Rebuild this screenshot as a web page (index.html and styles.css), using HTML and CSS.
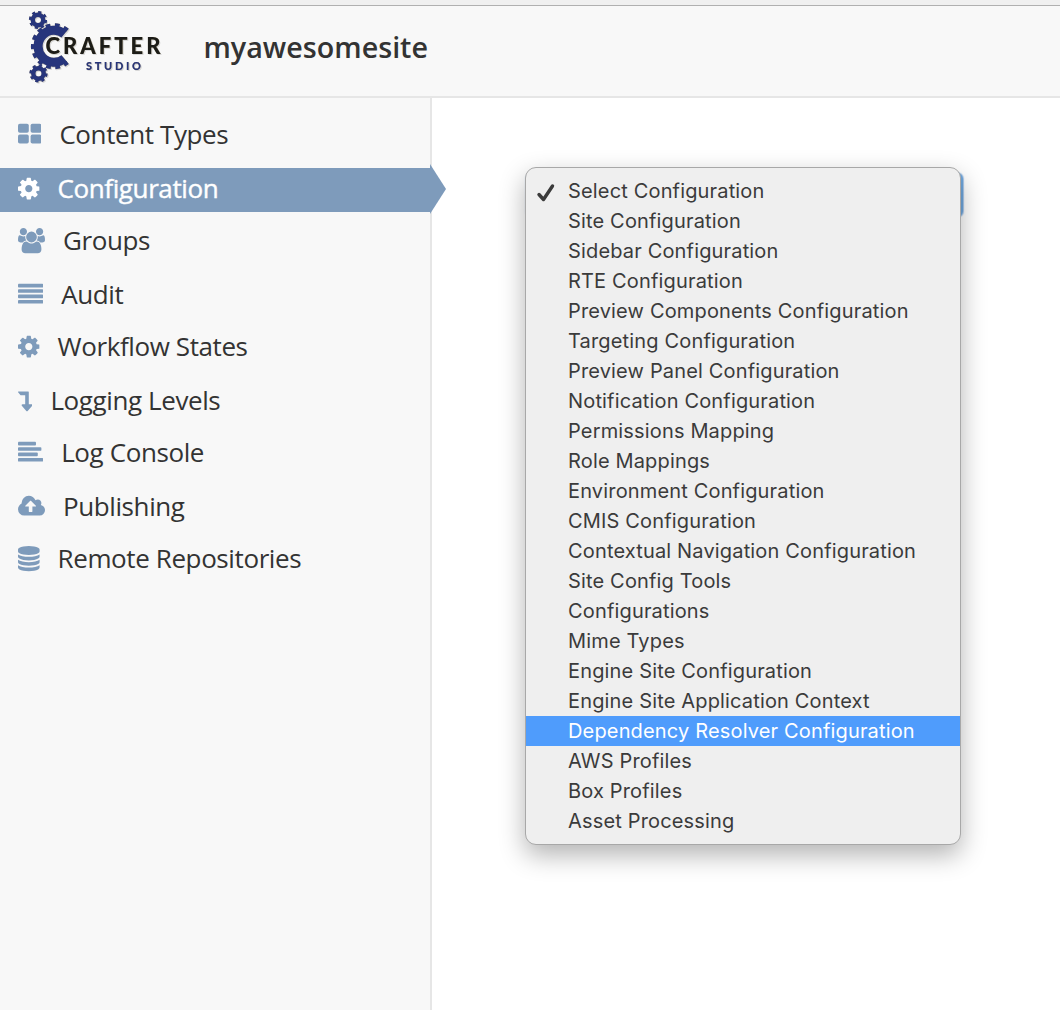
FILE: index.html
```html
<!DOCTYPE html>
<html lang="en">
<head>
<meta charset="utf-8">
<title>Crafter Studio</title>
<link rel="stylesheet" href="styles.css">
</head>
<body>
<svg class="sprite" width="0" height="0" aria-hidden="true">
  <symbol id="cog" viewBox="128 0 1536 1792"><path d="M1152 896q0-106-75-181t-181-75-181 75-75 181 75 181 181 75 181-75 75-181zm512-109v222q0 12-8 23t-20 13l-185 28q-19 54-39 91 35 50 107 138 10 12 10 25t-9 23q-27 37-99 108t-94 71q-12 0-26-9l-138-108q-44 23-91 38-16 136-29 186-7 28-36 28h-222q-14 0-24.5-8.5t-11.5-21.5l-28-184q-49-16-90-37l-141 107q-10 9-25 9-14 0-25-11-126-114-165-168-7-10-7-23 0-12 8-23 15-21 51-66.500t54-70.500q-27-50-41-99l-183-27q-13-2-21-12.500t-8-23.500v-222q0-12 8-23t19-13l186-28q14-46 39-92-40-57-107-138-10-12-10-24 0-10 9-23 26-36 98.500-107.500t94.500-71.500q13 0 26 10l138 107q44-23 91-38 16-136 29-186 7-28 36-28h222q14 0 24.500 8.500t11.500 21.500l28 184q49 16 90 37l142-107q9-9 24-9 13 0 25 10 129 119 165 170 7 8 7 22 0 12-8 23-15 21-51 66.500t-54 70.500q26 50 41 98l183 28q13 2 21 12.500t8 23.500z"/></symbol>
</svg>
<header class="header">
  <svg class="logo" width="140" height="80" viewBox="24 6 140 80">
    <g class="gear">
      <circle cx="38" cy="20" r="5.200" stroke-width="4.400"/>
      <circle cx="38" cy="20" r="7.800" stroke-width="2.600" stroke-dasharray="3.060 3.060"/>
      <circle cx="38.500" cy="73.500" r="5.200" stroke-width="4.400"/>
      <circle cx="38.500" cy="73.500" r="7.800" stroke-width="2.600" stroke-dasharray="3.060 3.060"/>
      <path d="M64.300 34A16 16 0 1 0 64.300 58.600" stroke-width="9"/>
      <path d="M67.600 30.100A21.200 21.200 0 1 0 67.600 62.500" stroke-width="3.600" stroke-dasharray="4.700 4.450"/>
    </g>
    <text class="logo-name" x="45.500" y="53.800" textLength="115">CRAFTER</text>
    <text class="logo-sub" x="86" y="70.300" textLength="55">STUDIO</text>
  </svg>
  <h1 class="site">myawesomesite</h1>
</header>
<div class="layout">
  <nav class="sidebar">
    <a class="item"><svg class="icon" width="23.400" height="25.200" viewBox="0 0 1664 1792"><rect y="128" width="768" height="640" rx="128"/><rect x="896" y="128" width="768" height="640" rx="128"/><rect y="896" width="768" height="640" rx="128"/><rect x="896" y="896" width="768" height="640" rx="128"/></svg><span>Content Types</span></a>
    <a class="item active"><svg class="icon" width="21.600" height="25.200"><use href="#cog"/></svg><span>Configuration</span></a>
    <a class="item"><svg class="icon" width="27" height="25.200" viewBox="0 0 1920 1792"><path d="M593 896q-162 5-265 128h-134q-82 0-138-40.500t-56-118.500q0-353 124-353 6 0 43.500 21t97.500 42.500 119 21.500q67 0 133-23-5 37-5 66 0 139 81 256zm1071 637q0 120-73 189.500t-194 69.500h-874q-121 0-194-69.500t-73-189.500q0-53 3.500-103.500t14-109 26.500-108.500 43-97.500 62-81 85.500-53.500 111.500-20q10 0 43 21.500t73 48 107 48 135 21.500 135-21.500 107-48 73-48 43-21.500q61 0 111.500 20t85.500 53.500 62 81 43 97.500 26.500 108.500 14 109 3.500 103.500zm-1024-1277q0 106-75 181t-181 75-181-75-75-181 75-181 181-75 181 75 75 181zm704 384q0 159-112.500 271.500t-271.500 112.500-271.500-112.500-112.500-271.500 112.500-271.500 271.500-112.500 271.500 112.500 112.500 271.500zm576 225q0 78-56 118.500t-138 40.500h-134q-103-123-265-128 81-117 81-256 0-29-5-66 66 23 133 23 59 0 119-21.500t97.500-42.500 43.500-21q124 0 124 353zm-128-609q0 106-75 181t-181 75-181-75-75-181 75-181 181-75 181 75 75 181z"/></svg><span>Groups</span></a>
    <a class="item"><svg class="icon" width="25.200" height="25.200" viewBox="0 0 1792 1792"><rect y="128" width="1792" height="256" rx="64"/><rect y="512" width="1792" height="256" rx="64"/><rect y="896" width="1792" height="256" rx="64"/><rect y="1280" width="1792" height="256" rx="64"/></svg><span>Audit</span></a>
    <a class="item"><svg class="icon" width="21.600" height="25.200"><use href="#cog"/></svg><span>Workflow States</span></a>
    <a class="item"><svg class="icon" width="14.400" height="25.200" viewBox="0 0 1024 1792"><path d="M32 256h704q13 0 22.500 9.500t9.500 22.500v864h192q40 0 58 37 17 37-9 68l-320 384q-18 22-49 22t-49-22l-320-384q-26-31-9-68 18-37 58-37h192v-640h-320q-14 0-25-11l-160-192q-13-14-4-34 9-19 29-19z"/></svg><span>Logging Levels</span></a>
    <a class="item"><svg class="icon" width="25.200" height="25.200" viewBox="0 0 1792 1792"><rect y="128" width="1280" height="256" rx="64"/><rect y="512" width="1664" height="256" rx="64"/><rect y="896" width="1408" height="256" rx="64"/><rect y="1280" width="1792" height="256" rx="64"/></svg><span>Log Console</span></a>
    <a class="item"><svg class="icon" width="27" height="25.200" viewBox="0 0 1920 1792"><path d="M1280 864q0-14-9-23l-352-352q-9-9-23-9t-23 9l-351 351q-10 12-10 24 0 14 9 23t23 9h224v352q0 13 9.500 22.500t22.500 9.500h192q13 0 22.500-9.500t9.500-22.500v-352h224q13 0 22.500-9.500t9.500-22.500zm640 288q0 159-112.500 271.500t-271.500 112.500h-1088q-185 0-316.500-131.500t-131.500-316.500q0-130 70-240t188-165q-2-30-2-43 0-212 150-362t362-150q156 0 285.500 87t188.500 231q71-62 166-62 106 0 181 75t75 181q0 76-41 138 130 31 213.500 135.500t83.500 238.500z"/></svg><span>Publishing</span></a>
    <a class="item"><svg class="icon" width="21.600" height="25.200" viewBox="0 0 1536 1792"><path d="M768 768q237 0 443-43t325-127v170q0 69-103 128t-280 93.500-385 34.500-385-34.500-280-93.500-103-128v-170q119 84 325 127t443 43zm0 768q237 0 443-43t325-127v170q0 69-103 128t-280 93.500-385 34.500-385-34.500-280-93.500-103-128v-170q119 84 325 127t443 43zm0-384q237 0 443-43t325-127v170q0 69-103 128t-280 93.500-385 34.500-385-34.500-280-93.500-103-128v-170q119 84 325 127t443 43zm0-1152q208 0 385 34.500t280 93.500 103 128v128q0 69-103 128t-280 93.500-385 34.500-385-34.500-280-93.500-103-128v-128q0-69 103-128t280-93.500 385-34.500z"/></svg><span>Remote Repositories</span></a>
  </nav>
  <main class="content">
    <div class="select">
      <ul class="menu">
        <li class="checked"><svg class="check" width="20" height="20" viewBox="0 0 20 20"><path d="M3 11.500L7.500 16.500L16.500 3"/></svg>Select Configuration</li>
        <li>Site Configuration</li>
        <li>Sidebar Configuration</li>
        <li>RTE Configuration</li>
        <li>Preview Components Configuration</li>
        <li>Targeting Configuration</li>
        <li>Preview Panel Configuration</li>
        <li>Notification Configuration</li>
        <li>Permissions Mapping</li>
        <li>Role Mappings</li>
        <li>Environment Configuration</li>
        <li>CMIS Configuration</li>
        <li>Contextual Navigation Configuration</li>
        <li>Site Config Tools</li>
        <li>Configurations</li>
        <li>Mime Types</li>
        <li>Engine Site Configuration</li>
        <li>Engine Site Application Context</li>
        <li class="highlight">Dependency Resolver Configuration</li>
        <li>AWS Profiles</li>
        <li>Box Profiles</li>
        <li>Asset Processing</li>
      </ul>
    </div>
  </main>
</div>
</body>
</html>
```
FILE: styles.css
```css
* { box-sizing: border-box; }
body {
  margin: 0;
  height: 1010px;
  display: flex;
  flex-direction: column;
  overflow: hidden;
  background: #fff;
  color: #333;
  font-family: "Open Sans", sans-serif;
  border-top: 5px solid #f0f0f0;
}
.sprite { position: absolute; }
.header {
  height: 93px;
  flex: none;
  display: flex;
  align-items: flex-start;
  background: #f8f8f8;
  border-top: 1px solid #b0b0b0;
  border-bottom: 2px solid #e6e6e6;
  padding-left: 24px;
}
.logo { filter: drop-shadow(0 0 0.6px #b8a983) drop-shadow(1.5px 1.5px 0.5px #d8d8d8); }
.gear { fill: none; stroke: #27357c; }
.logo-name {
  font: 900 22px Lato, sans-serif;
  fill: #1c1c18;
}
.logo-sub {
  font: 900 11px Lato, sans-serif;
  fill: #27357c;
}
.site {
  margin: 0 0 0 39.500px;
  font-size: 28.700px;
  font-weight: 600;
  line-height: 82px;
}
.layout { display: flex; flex: 1; }
.sidebar {
  width: 432px;
  flex: none;
  display: flex;
  flex-direction: column;
  padding-top: 16px;
  background: #f8f8f8;
  border-right: 2px solid #e6e6e6;
}
.item {
  display: flex;
  gap: 18px;
  height: 44px;
  flex: none;
  margin-bottom: 8px;
  padding: 0 0 0 18px;
  font-size: 26px;
  letter-spacing: -0.400px;
  line-height: 40px;
  white-space: nowrap;
}
.item:nth-child(odd) { margin-bottom: 10px; }
.icon { margin-top: 8.400px; fill: #7e9bbb; flex: none; }
.active {
  position: relative;
  background: #7e9bbb;
  color: #fff;
  -webkit-text-stroke: 0.4px #fff;
}
.active .icon { fill: #fff; }
.active::after {
  content: "";
  position: absolute;
  left: 430px;
  top: -4px;
  border: solid transparent;
  border-width: 25px 0 25px 16px;
  border-left-color: #7e9bbb;
}
.content { flex: 1; padding: 75px 0 0 94px; }
.select {
  width: 437px;
  height: 44px;
  border-radius: 6px;
  background: #70a8df;
  box-shadow: 0 0 1px 1px #a9c8ea;
}
.menu {
  position: relative;
  top: -6px;
  left: -1px;
  width: 436px;
  height: 678px;
  margin: 0;
  padding: 8px 0 0;
  list-style: none;
  background: #efefef;
  border: 1px solid #a8a8a8;
  border-radius: 11px;
  box-shadow: 0 10px 26px rgba(0,0,0,.3);
  font: 20px/30px Inter, sans-serif;
  letter-spacing: 0.160px;
  color: #3b3b3b;
}
.menu li { height: 30px; padding-left: 42px; white-space: nowrap; }
.menu .highlight { background: #4f9cfc; color: #fff; }
.menu .checked { display: flex; padding-left: 10px; }
.check { flex: none; margin: 6.500px 12px 0 0; fill: none; stroke: #3b3b3b; stroke-width: 3.400; stroke-linecap: round; stroke-linejoin: round; }
```
